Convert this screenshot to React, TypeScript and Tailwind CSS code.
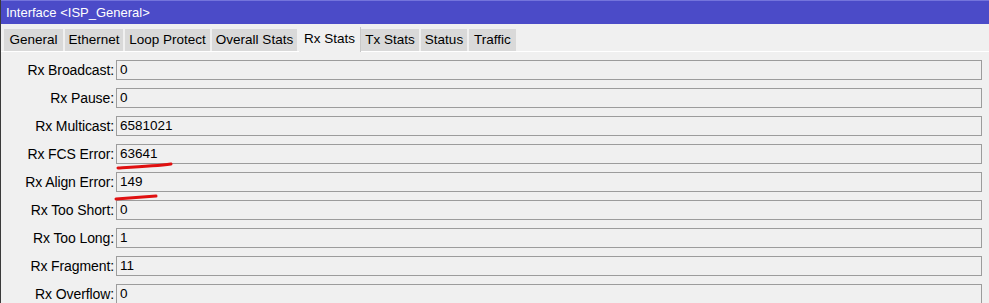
import React from "react";

const tabs = [
  { name: "General", w: "w-[61px]" },
  { name: "Ethernet", w: "w-[60px]" },
  { name: "Loop Protect", w: "w-[87px]" },
  { name: "Overall Stats", w: "w-[87px]" },
  { name: "Rx Stats", w: "w-[62px]", active: true },
  { name: "Tx Stats", w: "w-[60px]" },
  { name: "Status", w: "w-[48px]" },
  { name: "Traffic", w: "w-[49px]" },
];

const rows = [
  { label: "Rx Broadcast:", value: "0" },
  { label: "Rx Pause:", value: "0" },
  { label: "Rx Multicast:", value: "6581021" },
  { label: "Rx FCS Error:", value: "63641" },
  { label: "Rx Align Error:", value: "149" },
  { label: "Rx Too Short:", value: "0" },
  { label: "Rx Too Long:", value: "1" },
  { label: "Rx Fragment:", value: "11" },
  { label: "Rx Overflow:", value: "0" },
];

export default function App() {
  return (
    <div
      className="relative w-[989px] h-[303px] overflow-hidden bg-[#f0f0f0] border-l border-[#3a3a3a] text-[13px] text-black"
      style={{ fontFamily: '"Liberation Sans", Arial, sans-serif' }}
    >
      {/* title bar */}
      <div className="h-[24px] bg-[#4b4bc8] border-t border-[#7474dc] flex items-center pl-[5px] text-white">
        Interface &lt;ISP_General&gt;
      </div>

      {/* tab strip */}
      <div className="h-[28px] flex items-end pl-[3px] border-b border-white text-[13.5px]">
        {tabs.map((t) =>
          t.active ? (
            <div
              key={t.name}
              className={`${t.w} h-[25px] -mb-px bg-[#f0f0f0] flex items-start pt-[2px] justify-center border-r border-[#c8c8c8]`}
            >
              {t.name}
            </div>
          ) : (
            <div
              key={t.name}
              className={`${t.w} h-[22px] bg-[#d9d9d9] flex items-center justify-center border-r-2 border-[#f0f0f0]`}
            >
              {t.name}
            </div>
          )
        )}
      </div>

      {/* fields */}
      <div className="flex flex-col gap-[8px] pt-[8px] pr-[7px]">
        {rows.map((r) => (
          <div key={r.label} className="flex items-center h-[20px]">
            <div className="w-[115px] shrink-0 text-right pr-[2px] text-[14px] tracking-[-0.1px]">{r.label}</div>
            <div className="flex-1 h-[20px] border border-[#9c9c9c] flex items-center pl-[3px] text-[13.5px]">
              {r.value}
            </div>
          </div>
        ))}
      </div>

      {/* red marker underlines */}
      <svg className="absolute left-0 top-0 pointer-events-none" width="989" height="303">
        <path d="M117 168 C135 167 155 166 170 164" stroke="#e01010" strokeWidth="3" fill="none" strokeLinecap="round" />
        <path d="M115 199 C128 198 142 197 155 196" stroke="#e01010" strokeWidth="3" fill="none" strokeLinecap="round" />
      </svg>
    </div>
  );
}
